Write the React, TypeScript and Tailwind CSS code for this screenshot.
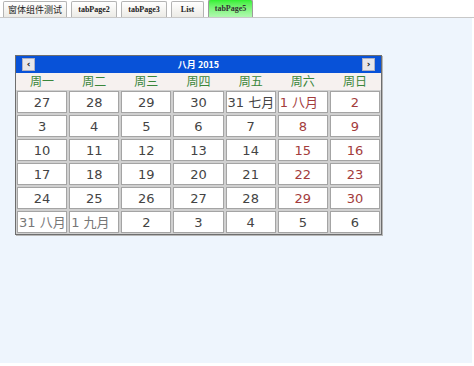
import React from "react";

const tabs = [
	{ t: "窗体组件测试", w: "w-[64px]" },
	{ t: "tabPage2", w: "w-[46px]" },
	{ t: "tabPage3", w: "w-[46px]" },
	{ t: "List", w: "w-[33px]" },
	{ t: "tabPage5", w: "w-[45px]" },
];
const weekDays = ["周一", "周二", "周三", "周四", "周五", "周六", "周日"];

type Day = { t: string; red?: boolean; dim?: boolean };

const rows: Day[][] = [
	[{ t: "27" }, { t: "28" }, { t: "29" }, { t: "30" }, { t: "31 七月" }, { t: "1 八月", red: true }, { t: "2", red: true }],
	[{ t: "3" }, { t: "4" }, { t: "5" }, { t: "6" }, { t: "7" }, { t: "8", red: true }, { t: "9", red: true }],
	[{ t: "10" }, { t: "11" }, { t: "12" }, { t: "13" }, { t: "14" }, { t: "15", red: true }, { t: "16", red: true }],
	[{ t: "17" }, { t: "18" }, { t: "19" }, { t: "20" }, { t: "21" }, { t: "22", red: true }, { t: "23", red: true }],
	[{ t: "24" }, { t: "25" }, { t: "26" }, { t: "27" }, { t: "28" }, { t: "29", red: true }, { t: "30", red: true }],
	[{ t: "31 八月", dim: true }, { t: "1 九月", dim: true }, { t: "2" }, { t: "3" }, { t: "4" }, { t: "5" }, { t: "6" }],
];

export default function App() {
	return (
		<div className="w-[474px] h-[366px] bg-white flex flex-col overflow-hidden" style={{ fontFamily: '"DejaVu Sans", "Noto Sans CJK SC", sans-serif' }}>
			<div className="h-[18px] flex items-end gap-[4px] pl-[3px] border-b border-[#c8c8c8] bg-white">
				{tabs.map(({ t, w }, i) =>
					i === 4 ? (
						<div key={t} className={`${w} shrink-0 h-[18px] flex items-center justify-center rounded-t-[3px] border border-b-0 border-[#9c9c9c] bg-gradient-to-b from-[#2ef02e] to-[#b0f8b0] text-[8px] font-bold text-[#333]`} style={{ fontFamily: '"Liberation Serif", serif' }}>
							{t}
						</div>
					) : (
						<div
							key={t}
							className={`${w} shrink-0 h-[16px] flex items-center justify-center rounded-t-[2px] border border-b-0 border-[#b4b4b4] bg-gradient-to-b from-white to-[#ecebe6] text-[#222] ${i === 0 ? "text-[9px]" : "text-[8px] font-bold"}`}
							style={i === 0 ? { fontFamily: '"Noto Sans CJK SC", sans-serif' } : { fontFamily: '"Liberation Serif", serif' }}
						>
							{t}
						</div>
					)
				)}
			</div>
			<div className="flex-1 bg-[#eef5fd] mr-[2px] mb-[3px] pt-[37px] pl-[15px]">
				<div className="w-[367px] border border-[#6e6e6e] bg-white shadow-[1px_1px_0_#b8b8b8]">
					<div className="h-[17px] bg-[#0852d8] flex items-center justify-between px-[6px]">
						<div className="w-[13px] h-[13px] bg-[#e6e6ea] border border-[#b0b0c0] flex items-center justify-center text-[9px] font-bold text-[#111] leading-none">‹</div>
						<div className="text-white text-[9px] font-bold" style={{ fontFamily: '"Noto Sans CJK SC", sans-serif' }}>八月 2015</div>
						<div className="w-[13px] h-[13px] bg-[#e6e6ea] border border-[#b0b0c0] flex items-center justify-center text-[9px] font-bold text-[#111] leading-none">›</div>
					</div>
					<div className="grid grid-cols-7 h-[17px] bg-[#f6f1ef]">
						{weekDays.map((d) => (
							<div key={d} className="flex items-center justify-center text-[12px] text-[#3a863a] leading-none">
								{d}
							</div>
						))}
					</div>
					<div className="grid grid-cols-7 gap-[2px] bg-[#d0d0d0] p-[1px]">
						{rows.flat().map((d, i) => (
							<div
								key={i}
								className={`h-[22px] bg-white border border-[#a4a4a4] flex items-center text-[13px] leading-none ${d.t.includes(" ") ? "justify-start pl-[1px]" : "justify-center"} ${d.red ? "text-[#a33c3c]" : d.dim ? "text-[#777]" : "text-[#444]"}`}
							>
								{d.t}
							</div>
						))}
					</div>
				</div>
			</div>
		</div>
	);
}
